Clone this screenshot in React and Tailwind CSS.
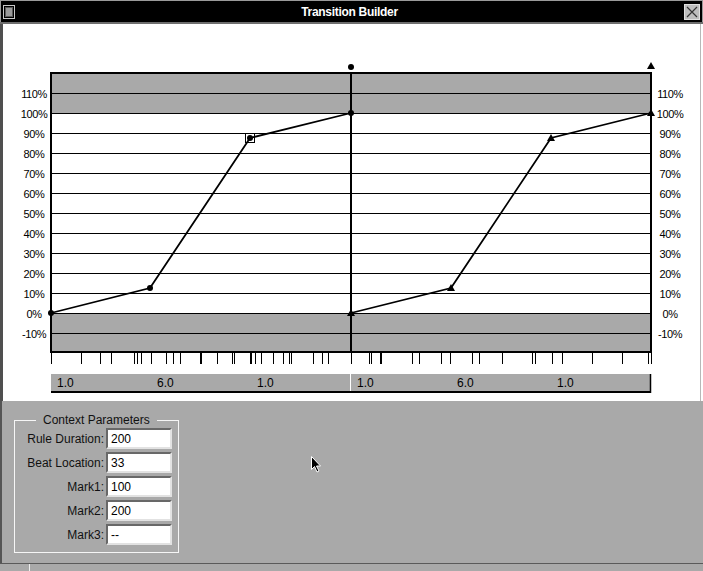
import React from "react";

const GRAY = "#a9a9a9";
const Y = (p) => 313 - p * 2;
const pcts = [110, 100, 90, 80, 70, 60, 50, 40, 30, 20, 10, 0, -10];

const ticks = [
  [51], [81], [100], [111], [134], [137], [141], [151], [166], [173], [180], [201, 1], [217], [232], [234], [251, 1], [255], [261], [273], [283], [289], [291], [313], [322], [328], [351],
  [369], [371], [381, 1], [412], [419], [441], [450], [472], [479], [502], [532], [535], [552], [562], [592], [622], [648], [651],
];

function Tri({ x, y, s = 4 }) {
  return <polygon points={`${x},${y - s} ${x - s},${y + s - 1} ${x + s},${y + s - 1}`} fill="#000" />;
}

function Chart() {
  const left = [[51, 313], [150, 288], [250, 138], [351, 113]];
  const right = [[351, 313], [451, 288], [551, 138], [651, 113]];
  return (
    <svg width="697" height="377" viewBox="3 24 697 377" className="block bg-white" style={{ fontFamily: "'Liberation Sans', Arial, sans-serif" }}>
      <rect x="51" y="73" width="600" height="40" fill={GRAY} />
      <rect x="51" y="313" width="600" height="39" fill={GRAY} />
      {pcts.map((p) => (
        <line key={p} x1="51" x2="651" y1={Y(p) + 0.5} y2={Y(p) + 0.5} stroke="#000" strokeWidth="1" />
      ))}
      <line x1="50" x2="652" y1="73" y2="73" stroke="#000" strokeWidth="2" />
      <line x1="50" x2="652" y1="352" y2="352" stroke="#000" strokeWidth="2" />
      <line x1="51" x2="51" y1="72" y2="353" stroke="#000" strokeWidth="2" />
      <line x1="351" x2="351" y1="72" y2="353" stroke="#000" strokeWidth="2" />
      <line x1="651" x2="651" y1="72" y2="353" stroke="#000" strokeWidth="2" />
      {pcts.map((p) => (
        <text key={"l" + p} x="34" y={Y(p) + 5} fontSize="11" textAnchor="middle" letterSpacing="-0.4" fill="#000">{p}%</text>
      ))}
      {pcts.map((p) => (
        <text key={"r" + p} x="670" y={Y(p) + 5} fontSize="11" textAnchor="middle" letterSpacing="-0.4" fill="#000">{p}%</text>
      ))}
      <polyline points={left.map((p) => p.join(",")).join(" ")} fill="none" stroke="#000" strokeWidth="1.8" />
      <polyline points={right.map((p) => p.join(",")).join(" ")} fill="none" stroke="#000" strokeWidth="1.8" />
      {left.map(([x, y], i) => (
        <circle key={i} cx={x} cy={y} r="3" fill="#000" />
      ))}
      <rect x="245.5" y="133.5" width="9" height="9" fill="none" stroke="#000" strokeWidth="1" />
      {right.map(([x, y], i) => (
        <Tri key={i} x={x} y={y} />
      ))}
      <circle cx="351" cy="67" r="3" fill="#000" />
      <Tri x={651} y={66} />
      {ticks.map(([x, t], i) => (
        <line key={i} x1={t ? x : x + 0.5} x2={t ? x : x + 0.5} y1="353" y2="364" stroke="#000" strokeWidth={t ? 2 : 1} />
      ))}
      <rect x="51" y="374" width="299" height="18" fill={GRAY} />
      <rect x="351" y="374" width="299" height="18" fill={GRAY} />
      <line x1="51" x2="651" y1="392" y2="392" stroke="#000" strokeWidth="2" />
      <line x1="650.5" x2="650.5" y1="374" y2="393" stroke="#000" strokeWidth="1.5" />
      {[["1.0", 57], ["6.0", 157], ["1.0", 257], ["1.0", 357], ["6.0", 457], ["1.0", 557]].map(([t, x], i) => (
        <text key={i} x={x} y="387" fontSize="12" fill="#000">{t}</text>
      ))}
    </svg>
  );
}

function Field({ label, value }) {
  return (
    <div className="flex items-center gap-[2px]">
      <div className="w-[89px] text-right text-[12px] leading-none text-[#111]">{label}</div>
      <div className="w-[66px] h-[21px] bg-white border-2 border-t-[#686868] border-l-[#686868] border-b-[#e2e2e2] border-r-[#e2e2e2] flex items-center pl-[3px] text-[12px] leading-none text-black">
        {value}
      </div>
    </div>
  );
}

export default function App() {
  return (
    <div className="relative w-[703px] h-[571px] overflow-hidden bg-[#a9a9a9] flex flex-col font-['Liberation_Sans',Arial,sans-serif]">
      {/* title bar */}
      <div className="h-[22px] bg-black border-t border-x border-[#9a9a9a] flex items-center px-[2px]">
        <div className="w-[12px] h-[14px] border border-[#c8c8c8] bg-black p-[1px] flex">
          <div className="flex-1 bg-[#9a9a9a] border border-[#5a5a5a]" />
        </div>
        <div className="flex-1 text-center text-white font-bold text-[12px] tracking-[-0.3px] leading-none">Transition Builder</div>
        <div className="w-[16px] h-[16px] bg-[#bdbdbd] border border-[#e0e0e0] flex items-center justify-center">
          <svg width="12" height="12" viewBox="0 0 12 12">
            <path d="M1 1 L11 11 M11 1 L1 11" stroke="#333" strokeWidth="1.2" />
          </svg>
        </div>
      </div>
      <div className="h-[2px] bg-[#6e6e6e]" />
      {/* chart area */}
      <div className="flex h-[377px]">
        <div className="w-[3px] bg-[#4f4f4f]" />
        <Chart />
        <div className="w-[3px] bg-white border-l border-[#b8b8b8]" />
      </div>
      {/* bottom panel */}
      <div className="flex-1 border-l-2 border-[#555] pl-[12px] pt-[12px]">
        <fieldset className="w-[165px] h-[140px] border border-[#f6f6f6] p-0 m-0">
          <legend className="ml-[21px] px-[7px] text-[12px] leading-[14px] text-[#111]">Context Parameters</legend>
          <div className="flex flex-col gap-[3px] pt-[1px]">
            <Field label="Rule Duration:" value="200" />
            <Field label="Beat Location:" value="33" />
            <Field label="Mark1:" value="100" />
            <Field label="Mark2:" value="200" />
            <Field label="Mark3:" value="--" />
          </div>
        </fieldset>
      </div>
      {/* status bar */}
      <div className="h-[8px] border-t border-[#5a5a5a] flex">
        <div className="w-[30px] border-r border-[#eeeeee]" />
        <div className="flex-1" />
      </div>
      {/* mouse cursor */}
      <svg className="absolute left-[311px] top-[456px]" width="12" height="18" viewBox="0 0 12 18">
        <path d="M0.5 0.5 L0.5 13.5 L3.5 10.5 L6 16 L8 15 L5.5 10 L9.5 10 Z" fill="#000" stroke="#fff" strokeWidth="1" />
      </svg>
    </div>
  );
}
